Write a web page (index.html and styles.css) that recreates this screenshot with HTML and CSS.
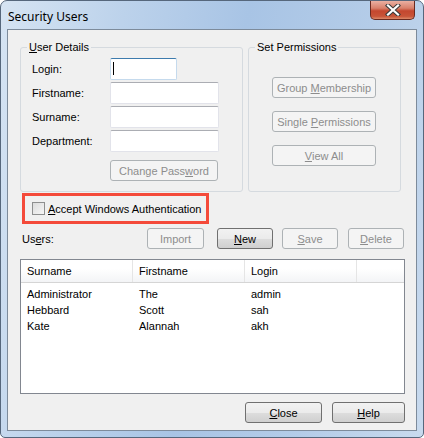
FILE: index.html
```
<!DOCTYPE html>
<html lang="en">
<head>
    <meta charset="UTF-8">
    <title>Security Users</title>
    <link rel="stylesheet" href="styles.css">
</head>
<body>

<div class="window">
    <div class="titlebar">
        <span class="title">Security Users</span>
        <span class="close-btn">
            <svg width="16" height="12" viewBox="0 0 16 12">
                <path d="M3 1.5 L13 10.5 M13 1.5 L3 10.5" stroke="#3b3b3b" stroke-width="4.2" stroke-linecap="square"/>
                <path d="M3 1.5 L13 10.5 M13 1.5 L3 10.5" stroke="#ffffff" stroke-width="2.2" stroke-linecap="square"/>
            </svg>
        </span>
    </div>

    <div class="client">
        <div class="groups">
            <div class="group details">
                <span class="legend"><u>U</u>ser Details</span>
                <div class="form">
                    <label>Login:</label>
                    <div class="textbox focused short"><span class="caret"></span></div>
                    <label>Firstname:</label>
                    <div class="textbox"></div>
                    <label>Surname:</label>
                    <div class="textbox"></div>
                    <label>Department:</label>
                    <div class="textbox"></div>
                </div>
                <button class="btn disabled pwd-btn">Change Pass<u>w</u>ord</button>
            </div>
            <div class="group perms">
                <span class="legend">Set Permissions</span>
                <button class="btn disabled perm-btn">Group <u>M</u>embership</button>
                <button class="btn disabled perm-btn">Single <u>P</u>ermissions</button>
                <button class="btn disabled perm-btn"><u>V</u>iew All</button>
            </div>
        </div>

        <div class="auth-mark">
            <span class="checkbox"></span>
            <span><u>A</u>ccept Windows Authentication</span>
        </div>

        <div class="users-bar">
            <span class="users-label">Us<u>e</u>rs:</span>
            <button class="btn disabled import-btn">Import</button>
            <button class="btn new-btn"><u>N</u>ew</button>
            <button class="btn disabled save-btn"><u>S</u>ave</button>
            <button class="btn disabled delete-btn"><u>D</u>elete</button>
        </div>

        <div class="list">
            <div class="list-head">
                <span class="col">Surname</span>
                <span class="col">Firstname</span>
                <span class="col">Login</span>
                <span class="col last"></span>
            </div>
            <div class="list-body">
                <div class="row"><span class="col">Administrator</span><span class="col">The</span><span class="col">admin</span></div>
                <div class="row"><span class="col">Hebbard</span><span class="col">Scott</span><span class="col">sah</span></div>
                <div class="row"><span class="col">Kate</span><span class="col">Alannah</span><span class="col">akh</span></div>
            </div>
        </div>

        <div class="footer">
            <button class="btn close-dlg"><u>C</u>lose</button>
            <button class="btn help-btn"><u>H</u>elp</button>
        </div>
    </div>
</div>

</body>
</html>
```

FILE: styles.css
```
body {
    margin: 0;
    font-family: "Liberation Sans", Arial, sans-serif;
    font-size: 11px;
    color: #000;
    background: #ffffff;
}
.window {
    width: 424px;
    height: 438px;
    box-sizing: border-box;
    border: 1px solid #56677c;
    border-radius: 7px 7px 5px 5px;
    background: linear-gradient(100deg, #d6e4f3 0%, #bcd2eb 25%, #a8c4e5 50%, #b4cce8 75%, #c8daee 100%);
    display: flex;
    flex-direction: column;
    overflow: hidden;
}
.titlebar {
    height: 28px;
    display: flex;
    justify-content: space-between;
    align-items: flex-start;
}
.title {
    font-family: "Noto Sans", "Open Sans", sans-serif;
    font-size: 12px;
    margin: 7px 0 0 7px;
    color: #000;
}
.close-btn {
    width: 43px;
    height: 18px;
    margin-right: 8px;
    border: 1px solid #6a2a20;
    border-top: none;
    border-radius: 0 0 5px 5px;
    background: linear-gradient(#eab0a2 0%, #d8806b 40%, #c4472f 55%, #c85438 85%, #dd8a6a 100%);
    display: flex;
    align-items: center;
    justify-content: center;
}
.close-btn svg {
    display: block;
}
.client {
    margin: 0 6px;
    height: 402px;
    box-sizing: border-box;
    border: 1px solid #7d8b9b;
    background: #f0f0f0;
}

/* group boxes */
.groups {
    display: flex;
    margin: 17px 0 0 12px;
    gap: 5px;
}
.group {
    position: relative;
    height: 145px;
    box-sizing: border-box;
    border: 1px solid #d5dadf;
    border-radius: 3px;
}
.details {
    width: 223px;
    padding: 10px 0 0 11px;
}
.perms {
    width: 153px;
    padding: 29px 0 0 23px;
}
.legend {
    position: absolute;
    top: -7px;
    left: 6px;
    padding: 0 2px;
    background: #f0f0f0;
    line-height: 13px;
}
.form {
    display: grid;
    grid-template-columns: 78px 109px;
    row-gap: 2px;
    align-items: center;
}
.textbox {
    height: 22px;
    box-sizing: border-box;
    background: #fff;
    border: 1px solid #e2e3ea;
    border-top-color: #abadb3;
    border-radius: 2px;
}
.textbox.short {
    width: 67px;
}
.textbox.focused {
    border-color: #c5daed;
    border-top-color: #3d7bad;
    position: relative;
}
.caret {
    position: absolute;
    left: 2px;
    top: 3px;
    width: 1px;
    height: 13px;
    background: #000;
}

/* buttons */
.btn {
    font-family: "Liberation Sans", Arial, sans-serif;
    font-size: 11px;
    height: 21px;
    padding: 0;
    box-sizing: border-box;
    border: 1px solid #707070;
    border-radius: 3px;
    color: #000;
    background: linear-gradient(#f2f2f2 0%, #ebebeb 50%, #dddddd 51%, #cfcfcf 100%);
    display: block;
}
.btn.disabled {
    color: #8d8d8d;
    border-color: #adb2b5;
    background: #f4f4f4;
}
.pwd-btn {
    width: 108px;
    margin: 8px 0 0 78px;
}
.perm-btn {
    width: 104px;
    margin-bottom: 13px;
}

/* highlighted checkbox */
.auth-mark {
    width: 187px;
    height: 31px;
    box-sizing: border-box;
    margin: 1px 0 0 14px;
    border: 3px solid #f44a3a;
    display: flex;
    align-items: center;
    padding-left: 7px;
    gap: 3px;
}
.checkbox {
    width: 13px;
    height: 13px;
    box-sizing: border-box;
    border: 1px solid #8e8f8f;
    background: linear-gradient(135deg, #dcdcdc, #f6f6f6);
}

/* users toolbar */
.users-bar {
    display: flex;
    align-items: center;
    margin: 4px 0 0 14px;
}
.users-label {
    width: 125px;
}
.import-btn {
    width: 57px;
}
.new-btn {
    width: 56px;
    margin-left: 13px;
}
.save-btn {
    width: 56px;
    margin-left: 9px;
}
.delete-btn {
    width: 56px;
    margin-left: 10px;
}

/* list view */
.list {
    margin: 10px 0 0 12px;
    width: 385px;
    height: 135px;
    box-sizing: border-box;
    border: 1px solid #828790;
    background: #fff;
}
.list-head {
    display: flex;
    height: 22px;
    background: linear-gradient(#ffffff 0%, #ffffff 40%, #f3f4f6 100%);
    border-bottom: 1px solid #d5d5d5;
}
.list-head .col {
    border-right: 1px solid #e5e5e5;
    line-height: 22px;
}
.list-head .col.last {
    border-right: none;
    flex: 1;
}
.col {
    width: 105px;
    padding-left: 6px;
    flex-shrink: 0;
}
.list-body {
    padding-top: 3px;
}
.row {
    display: flex;
    height: 16px;
    line-height: 16px;
}
.row .col {
    width: 106px;
}

/* dialog buttons */
.footer {
    display: flex;
    justify-content: flex-end;
    gap: 10px;
    margin: 8px 11px 0 0;
}
.close-dlg {
    width: 77px;
}
.help-btn {
    width: 73px;
}
```
